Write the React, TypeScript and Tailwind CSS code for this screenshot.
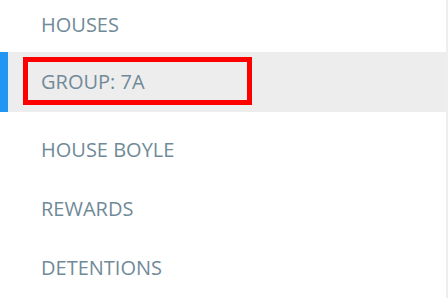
export default function App() {
  const font = { fontFamily: '"Open Sans", "Liberation Sans", sans-serif' };

  return (
    <div className="w-[448px] h-[298px] bg-white overflow-hidden flex" style={font}>
      <div className="flex-1 flex flex-col text-[20px] text-[#718a98] leading-none">
        <div className="h-[50px] flex items-center pl-[41px]">HOUSES</div>
        <div className="mt-[3px] h-[60px] flex">
          <div className="w-[8px] bg-[#2196f3]" />
          <div className="relative flex-1 bg-[#ededed] flex items-center pl-[33px]">
            GROUP: 7A
            <div className="absolute left-[15px] top-[5px] w-[229px] h-[48px] border-[5px] border-[#ff0000]" />
          </div>
        </div>
        <div className="mt-[8px] h-[60px] flex items-center pl-[41px]">HOUSE BOYLE</div>
        <div className="h-[60px] flex items-center pl-[41px]">REWARDS</div>
        <div className="h-[60px] flex items-center pl-[41px]">DETENTIONS</div>
      </div>
      <div className="w-[2px] bg-[#eeeeee]" />
    </div>
  );
}
